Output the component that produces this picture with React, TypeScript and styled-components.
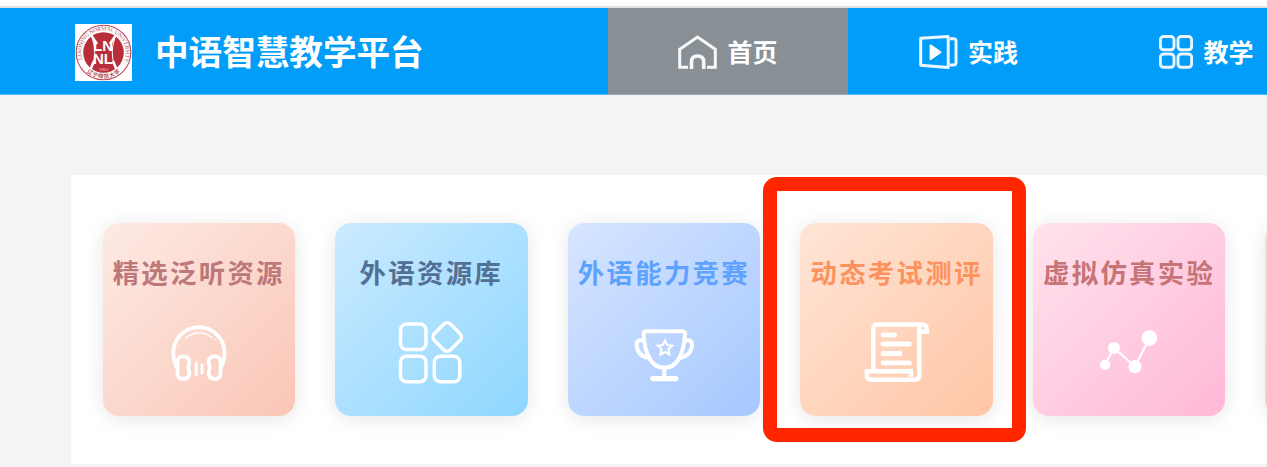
import React from 'react';
import styled, { createGlobalStyle } from 'styled-components';

const GlobalStyle = createGlobalStyle`
  * { box-sizing: border-box; }
  body {
    margin: 0;
    background: #f4f4f4;
    font-family: "Noto Sans CJK SC", sans-serif;
    overflow: hidden;
  }
  svg { display: block; flex: none; }
`;

const Page = styled.div`
  width: 100%;
  height: 467px;
  overflow: hidden;
  background: #f4f4f4;
`;

const TopStrip = styled.div`
  height: 8px;
  background: #fff;
  border-bottom: 2px solid #e2e3e3;
`;

const Header = styled.header`
  display: flex;
  height: 87px;
  background: #029df8;
  border-bottom: 1px solid #4db9f7;
`;

const Brand = styled.div`
  display: flex;
  align-items: center;
  flex: none;
  width: 608px;
  padding-left: 75px;
  padding-top: 2px;
`;

const BrandName = styled.h1`
  margin: 0 0 2px 23px;
  font-size: 33.6px;
  line-height: 48px;
  font-weight: 700;
  color: #fff;
  white-space: nowrap;
`;

const NavItem = styled.a<{ $active?: boolean; $width?: number }>`
  display: flex;
  align-items: center;
  justify-content: center;
  flex: none;
  width: ${(p) => p.$width ?? 240}px;
  height: ${(p) => (p.$active ? 87 : 86)}px;
  padding-top: 2px;
  gap: 10px;
  color: #fff;
  background: ${(p) => (p.$active ? '#889096' : 'transparent')};
  border-bottom: ${(p) => (p.$active ? '1px solid #a5abaf' : 'none')};
`;

const NavLabel = styled.span`
  margin-bottom: 3px;
  font-size: 25px;
  line-height: 36px;
  font-weight: 700;
  white-space: nowrap;
`;

const Panel = styled.main`
  display: flex;
  gap: 40.1px;
  width: 1500px;
  height: 289px;
  margin: 80px 0 0 71px;
  padding: 48px 31.5px;
  background: #fff;
`;

const Card = styled.section<{ $from: string; $to: string; $color: string; $raised?: boolean }>`
  position: relative;
  z-index: ${(p) => (p.$raised ? 1 : 0)};
  display: flex;
  flex-direction: column;
  align-items: center;
  flex: none;
  width: 192.5px;
  height: 192.5px;
  padding-top: 29px;
  border-radius: 16px;
  color: ${(p) => p.$color};
  background: linear-gradient(135deg, ${(p) => p.$from}, ${(p) => p.$to});
  box-shadow: 0 3px 20px rgba(0, 0, 0, 0.1);
`;

const CardTitle = styled.h2`
  margin: 0;
  font-size: 26.4px;
  line-height: 40px;
  font-weight: 700;
  letter-spacing: 2.3px;
  white-space: nowrap;
`;

const CardIcon = styled.div`
  margin-top: 21px;
`;

const Highlight = styled.div`
  position: absolute;
  left: -37.2px;
  top: -46.3px;
  width: 263px;
  height: 265.5px;
  border: 14.5px solid #ff2600;
  border-radius: 14px;
`;

const Seal = () => (
  <svg width="57" height="57" viewBox="0 0 57 57">
    <rect width="57" height="57" fill="#fff" />
    <circle cx="28.5" cy="28.5" r="27.3" fill="none" stroke="#bf4a57" strokeWidth="1.1" />
    <circle cx="28.5" cy="28.5" r="20.3" fill="#b92c3a" />
    <path d="M14 8 L22 20 M43 8 L35 20 M19 37 L14 49 M38 37 L43 49" fill="none" stroke="#fff" strokeWidth="2.6" />
    <path d="M17.5 15 Q22 28 17.5 42 M39.5 15 Q35 28 39.5 42" fill="none" stroke="#fff" strokeWidth="1" />
    <defs>
      <path id="seal-top" d="M7.6 36.3 A22.3 22.3 0 1 1 49.4 36.3" />
      <path id="seal-bottom" d="M9 45.5 A26 26 0 0 0 48 45.5" />
    </defs>
    <text fontFamily="Liberation Serif, serif" fontSize="5.6" fill="#b14553">
      <textPath href="#seal-top" startOffset="1" textLength="86">LIAONING NORMAL UNIVERSITY</textPath>
    </text>
    <text fontFamily="Noto Sans CJK SC, sans-serif" fontSize="5.5" fontWeight="700" fill="#a94d57">
      <textPath href="#seal-bottom" startOffset="4" textLength="36">辽宁师范大学</textPath>
    </text>
    <text fontFamily="Liberation Sans, sans-serif" fontWeight="700" fontSize="15" fill="#fff">
      <tspan x="18" y="27">LN</tspan>
      <tspan x="18" y="40.3">NL</tspan>
    </text>
    <text x="23.7" y="46.6" fontFamily="Liberation Sans, sans-serif" fontSize="4.4" fill="#efc4c8">1951</text>
  </svg>
);

const HomeIcon = () => (
  <svg width="39" height="34" viewBox="0 0 39 34" fill="none" stroke="#f6f8f9" strokeWidth="3">
    <path d="M10 32.3 H1.7 V14.2 L19.5 2 L37.3 14.2 V32.3 H29" />
    <path d="M13.5 34 V27 Q13.5 21 19.5 21 Q25.7 21 25.7 27 V34" strokeWidth="3.6" />
  </svg>
);

const PracticeIcon = () => (
  <svg width="39" height="34" viewBox="0 0 39 34" fill="none" stroke="#eef6fd" strokeWidth="3" strokeLinejoin="round">
    <path d="M1.7 3.2 L29.2 1.5 V32.5 L1.7 30.3 Z" />
    <path d="M31 3.7 H34.5 Q37 3.7 37 6 V27.5 Q37 30 34.5 30 H31" />
    <path d="M11.5 10.3 L21.5 17.2 L11.5 24.3 Z" fill="#fff" stroke="#fff" strokeWidth="1.8" />
  </svg>
);

const TeachIcon = () => (
  <svg width="34" height="34" viewBox="0 0 34 34" fill="none" stroke="#eaf4fc" strokeWidth="2.9">
    <rect x="1.4" y="1.5" width="13.6" height="13.3" rx="3.2" />
    <rect x="19" y="1.5" width="13.6" height="13.3" rx="3.2" />
    <rect x="1.4" y="19" width="13.6" height="13.3" rx="3.2" />
    <rect x="19" y="19" width="13.6" height="13.3" rx="3.2" />
  </svg>
);

/* Card icons share an 80x80 canvas centred under the title. */
const IconCanvas = ({ children }: { children: React.ReactNode }) => (
  <svg width="80" height="80" viewBox="0 0 80 80" fill="none" stroke="#fff" strokeLinecap="round" strokeLinejoin="round">
    {children}
  </svg>
);

const HeadphonesIcon = () => (
  <IconCanvas>
    <path d="M17 53 Q14.3 47 14.3 39.7 A25.6 25.6 0 0 1 65.5 39.7 Q65.5 47 62.8 53" strokeWidth="3.8" />
    <path d="M27 24.8 Q39.5 15 53 24.3" strokeWidth="1.5" />
    <circle cx="56" cy="26.5" r="0.8" fill="#fff" stroke="none" />
    <path d="M18.5 50 C18.5 45 20 43.3 24 43.3 S30.3 45 30.3 49 C30.3 52 29.3 52 29.3 55 C29.3 57 30.5 58 30.3 60.5 C30 64.2 27.8 66 24.3 66 S18.5 64 18.5 60 Z" strokeWidth="3.8" />
    <path d="M61.5 50 C61.5 45 60 43.3 56 43.3 S49.7 45 49.7 49 C49.7 52 50.7 52 50.7 55 C50.7 57 49.5 58 49.7 60.5 C50 64.2 52.2 66 55.7 66 S61.5 64 61.5 60 Z" strokeWidth="3.8" />
    <path d="M37.2 50.3 V61.5 M43 51.8 V60" strokeWidth="3" />
  </IconCanvas>
);

const AppsIcon = () => (
  <IconCanvas>
    <g strokeWidth="3.5">
      <rect x="9.5" y="11" width="25.5" height="25.5" rx="6" />
      <rect x="9.5" y="43.3" width="25.5" height="25.5" rx="6" />
      <rect x="43.3" y="43.3" width="25.5" height="25.5" rx="6" />
      <rect x="44.7" y="12.5" width="23" height="23" rx="5" transform="rotate(45 56.2 24)" />
    </g>
  </IconCanvas>
);

const TrophyIcon = () => (
  <IconCanvas>
    <g strokeWidth="4" transform="translate(0.5 0)">
      <path d="M21.5 18.3 H58 Q61 18.3 60.5 21.5 Q58 54.7 39.8 54.7 Q21.6 54.7 19 21.5 Q18.6 18.3 21.5 18.3 Z" />
      <path d="M18.5 27.3 H15.5 Q12 27.3 12 32 Q13 43 24.5 45" />
      <path d="M61 27.3 H64 Q67.5 27.3 67.5 32 Q66.5 43 55 45" />
      <path d="M39.8 55 V65" strokeLinecap="butt" />
      <path d="M28.3 65.6 H51.2" strokeWidth="5.3" />
    </g>
    <path transform="translate(1.2 0)" d="M39.8 27.5 L42 32 L47 32.7 L43.3 36.1 L44.2 41.5 L39.8 39 L35.3 41.5 L36.3 36.1 L32.6 32.7 L37.5 32 Z" strokeWidth="2.1" strokeLinejoin="miter" />
  </IconCanvas>
);

const ScrollIcon = () => (
  <IconCanvas>
    <g strokeWidth="4.4">
      <path d="M16.3 58 V15.8 Q16.3 11.5 20.6 11.5 H64.7 Q69.7 11.5 69.7 16 V18.8 H62.3 V62.5 Q62.3 66.8 58 66.8 H14.6 Q9.8 66.8 9.8 62.5 V58.2 H54 V64" strokeLinejoin="miter" strokeLinecap="butt" />
      <path d="M62.3 21 V13" strokeLinecap="butt" />
      <path d="M26 21.8 H37.7 M26 31 H52.5 M26 40.5 H43 M26 49.9 H52.5" strokeWidth="4.8" />
    </g>
  </IconCanvas>
);

const NodesIcon = () => (
  <IconCanvas>
    <path d="M16 51.5 L25 35 L46 53.5 L60.5 25" strokeWidth="2.2" />
    <g fill="#fff" stroke="none">
      <circle cx="16" cy="51.6" r="5.2" />
      <circle cx="24.9" cy="35" r="6" />
      <circle cx="46" cy="53.6" r="6.6" />
      <circle cx="60.4" cy="25" r="7.8" />
    </g>
  </IconCanvas>
);

const cards = [
  { title: '精选泛听资源', from: '#fdeae4', to: '#fac6b6', color: '#bd787a', icon: <HeadphonesIcon /> },
  { title: '外语资源库', from: '#cbeaff', to: '#8ed7ff', color: '#526f96', icon: <AppsIcon /> },
  { title: '外语能力竞赛', from: '#d7e5ff', to: '#a5c8ff', color: '#5ea2ff', icon: <TrophyIcon /> },
  { title: '动态考试测评', from: '#ffe5d7', to: '#ffc6a5', color: '#fc935f', icon: <ScrollIcon />, marked: true },
  { title: '虚拟仿真实验', from: '#ffe3ee', to: '#ffb8d6', color: '#c67475', icon: <NodesIcon /> },
  { title: '', from: '#ffdcdc', to: '#ffb4b4', color: '#c67475', icon: null },
];

export default function App() {
  return (
    <Page>
      <GlobalStyle />
      <TopStrip />
      <Header>
        <Brand>
          <Seal />
          <BrandName>中语智慧教学平台</BrandName>
        </Brand>
        <NavItem $active><HomeIcon /><NavLabel>首页</NavLabel></NavItem>
        <NavItem $width={241}><PracticeIcon /><NavLabel>实践</NavLabel></NavItem>
        <NavItem $width={235}><TeachIcon /><NavLabel>教学</NavLabel></NavItem>
      </Header>
      <Panel>
        {cards.map((c, i) => (
          <Card key={i} $from={c.from} $to={c.to} $color={c.color} $raised={c.marked}>
            <CardTitle>{c.title}</CardTitle>
            <CardIcon>{c.icon}</CardIcon>
            {c.marked && <Highlight />}
          </Card>
        ))}
      </Panel>
    </Page>
  );
}
